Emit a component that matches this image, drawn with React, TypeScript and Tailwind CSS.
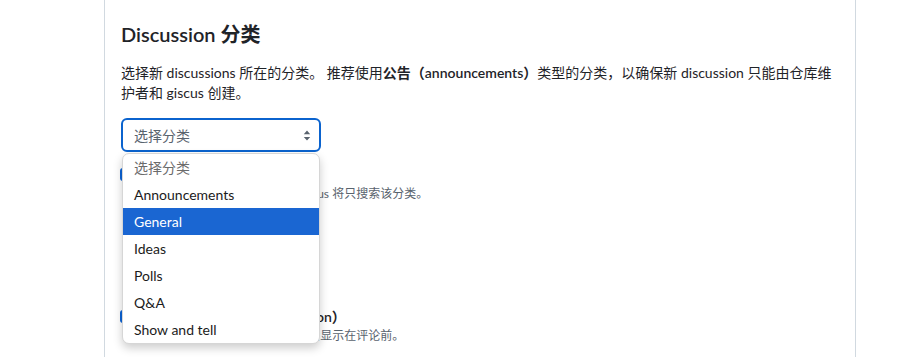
import React from 'react';

const font = {
  fontFamily: 'Lato, "Noto Sans CJK SC", sans-serif',
};

const options = ['选择分类', 'Announcements', 'General', 'Ideas', 'Polls', 'Q&A', 'Show and tell'];

function Checkbox() {
  return (
    <span className="-ml-[1px] mt-[3px] flex h-[13px] w-[13px] shrink-0 items-center justify-center rounded-[3px] bg-[#0b63d6]">
      <svg viewBox="0 0 12 12" className="h-[10px] w-[10px]" fill="none" stroke="white" strokeWidth="1.8">
        <path d="M2.5 6.2l2.4 2.4 4.6-5" />
      </svg>
    </span>
  );
}

function CheckRow({ label, hint }: { label: string; hint: string }) {
  return (
    <div className="flex gap-[8px]">
      <Checkbox />
      <div>
        <div className="text-[14px] font-semibold leading-[20px] text-[#1f2328]">{label}</div>
        <div className="text-[12px] leading-[18px] text-[#59636e]">{hint}</div>
      </div>
    </div>
  );
}

function Cursor() {
  return (
    <svg
      className="absolute left-[250px] top-[220px] h-[20px] w-[14px]"
      viewBox="0 0 12 19"
      fill="white"
      stroke="black"
      strokeWidth="1"
      strokeLinejoin="round"
    >
      <path d="M0.5 0.5v15.5l3.7-3.6 2.4 5.6 2.3-1-2.4-5.5h5.2z" />
    </svg>
  );
}

export default function App() {
  return (
    <div className="relative h-[357px] w-[919px] overflow-hidden bg-white" style={font}>
      <div className="ml-[104px] h-full w-[752px] border-x border-[#d1d9e0] px-4 pt-[19px]">
        <h3 className="text-[20px] font-semibold leading-[30px] text-[#1f2328]">Discussion 分类</h3>
        <p className="mt-[14px] text-[14px] leading-[20px] text-[#1f2328]">
          选择新 discussions 所在的分类。 推荐使用<strong className="font-semibold">公告（announcements）</strong>类型的分类，以确保新 discussion 只能由仓库维护者和 giscus 创建。
        </p>

        <div className="relative mt-[15px] w-[200px]">
          <div className="flex h-[34px] items-center justify-between rounded-[6px] border-2 border-[#0b63ce] pl-[11px] pr-[8px] text-[14px] text-[#59636e]">
            <span>选择分类</span>
            <svg viewBox="0 0 8 12" className="h-[11px] w-[8px]" fill="#59636e">
              <path d="M4 0.5l3.5 4H0.5z M4 11.5l3.5-4H0.5z" />
            </svg>
          </div>

          {/* open native list */}
          <div className="absolute left-[1px] top-[35px] z-10 w-[198px] overflow-hidden rounded-[7px] border border-[#d6d6d6] bg-white shadow-[0_4px_10px_rgba(0,0,0,0.2)]">
            {options.map((o, i) => (
              <div
                key={o}
                className={
                  i === 2
                    ? 'flex h-[27px] items-center bg-[#1a66d2] pl-[11px] text-[14px] text-white'
                    : i === 0
                      ? 'flex h-[27px] items-center pl-[11px] text-[14px] text-[#6b6b6b]'
                      : 'flex h-[27px] items-center pl-[11px] text-[14px] text-[#1b1b1b]'
                }
              >
                {o}
              </div>
            ))}
          </div>
        </div>

        <div className="mt-[13px]">
          <CheckRow label="只在该分类中搜索 discussion" hint="当搜索匹配的 discussion 时，giscus 将只搜索该分类。" />
        </div>

        <h3 className="mt-[38px] pl-[4px] text-[20px] font-semibold leading-[30px] text-[#1f2328]">特性</h3>
        <p className="mt-[8px] pl-[4px] text-[14px] leading-[20px] text-[#1f2328]">选择是否启用以下特性。</p>

        <div className="mt-[8px]">
          <CheckRow label="启用主帖子上的反应（reaction）" hint="Discussion 的主帖子上的反应将会显示在评论前。" />
        </div>
      </div>
      <Cursor />
    </div>
  );
}
